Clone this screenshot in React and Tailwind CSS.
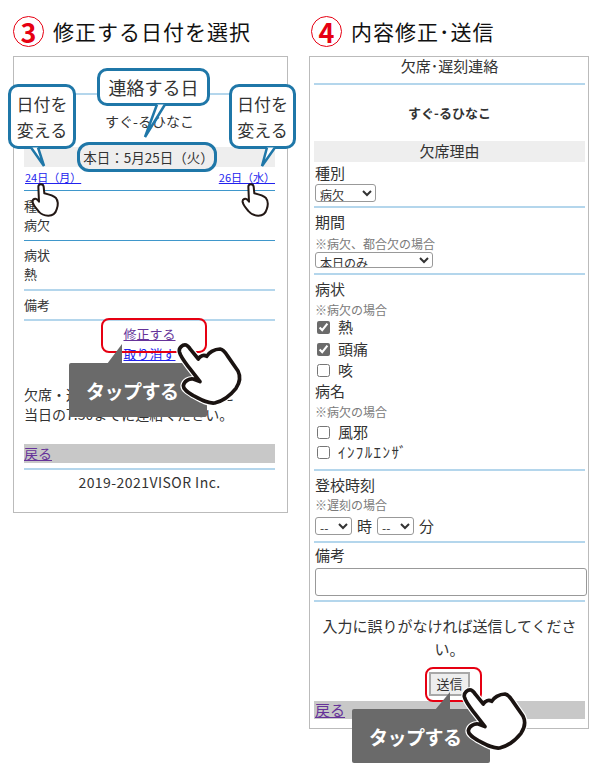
import React from "react";

const Line = ({ light }) => (
  <div className={light ? "h-[2px] shrink-0 bg-[#b4d6ec]" : "h-[1px] shrink-0 bg-[#3f97cb]"} />
);

// Heading with the red circled number
const Heading = ({ num, title, className }) => (
  <div className={`flex h-[56px] items-start pt-[16px] ${className}`}>
    <div className="flex h-[31px] w-[31px] items-center justify-center rounded-full border-[1.500px] border-[#e60012] text-[27px] font-bold leading-none text-[#e60012]">
      {num}
    </div>
    <div className="ml-[9px] h-[31px] text-[21px] leading-[31px] tracking-[1px] text-[#111]">{title}</div>
  </div>
);

const Row = ({ children, className = "" }) => (
  <div className={`flex shrink-0 items-center ${className}`}>{children}</div>
);

const Label = ({ children, className = "h-[28px]" }) => (
  <Row className={`${className} pl-[1px] text-[15px]`}>{children}</Row>
);

const Note = ({ children, className = "h-[15px]" }) => (
  <Row className={`${className} pl-[1px] text-[12px] text-[#7a7a7a]`}>{children}</Row>
);

const Check = ({ label, checked, className = "h-[22px]" }) => (
  <Row className={`${className} pl-[3px] text-[15px]`}>
    <input type="checkbox" defaultChecked={checked} className="m-0 h-[13px] w-[13px] accent-[#6b6b6b]" />
    <span className="ml-[8px]">{label}</span>
  </Row>
);

// Blue speech bubble, tail is drawn in the overlay svg
const Bubble = ({ className, children }) => (
  <div className={`absolute flex items-center justify-center rounded-[10px] border-[3px] border-[#1f77a8] bg-white text-center text-[#333] ${className}`}>
    {children}
  </div>
);

const Tap = ({ className }) => (
  <div className={`absolute flex h-[54px] w-[138px] items-center rounded-[2px] bg-[#6a6a6a] pl-[17px] text-[19px] font-bold leading-none tracking-[-0.500px] text-white ${className}`}>
    タップする
  </div>
);

const bigHand =
  "M28 50C26 38 38 28 48 30C54 32 58 38 62 44L85 72C90 62 102 58 110 64C116 54 132 42 150 42C160 44 166 52 172 62L204 108C212 124 210 142 198 160C182 180 160 198 134 204C112 206 92 194 70 182C54 172 40 164 40 152C42 138 58 130 70 132L90 140L62 104C50 88 32 68 28 50Z";

const BigHand = ({ className }) => (
  <svg viewBox="0 0 255 240" className={`absolute h-[80px] w-[85px] ${className}`}>
    <path d={bigHand} fill="#fff" stroke="#fff" strokeWidth="18" strokeLinejoin="round" />
    <path d={bigHand} fill="#fff" stroke="#1a1311" strokeWidth="11" strokeLinejoin="round" />
  </svg>
);

const SmallHand = ({ className }) => (
  <svg viewBox="0 0 135 135" className={`absolute h-[45px] w-[45px] ${className}`}>
    <path
      d="M40 35C40 25 55 25 56 35L58 55C70 58 85 62 92 68C100 78 100 90 95 103C92 115 85 122 70 122C55 122 48 118 40 108C33 100 26 92 23 82C21 72 32 68 38 75L42 80Z"
      fill="#fff"
      stroke="#231815"
      strokeWidth="6"
      strokeLinejoin="round"
    />
  </svg>
);

const RedBox = ({ className }) => (
  <div className={`absolute rounded-[8px] border-[2px] border-[#e60012] ${className}`} />
);

function PanelLeft() {
  return (
    <div className="flex h-[457px] w-[275px] flex-col border border-[#bbb] pl-[10px] pr-[12px] text-[13px] text-[#333]">
      <div className="h-[36px] shrink-0" />
      <Line light />
      <Row className="h-[52px] justify-center text-[14px]">すぐ-るひなこ</Row>
      {/* date text sits in the callout pill on top of this bar */}
      <div className="h-[20px] shrink-0 bg-[#eee]" />
      <div className="flex h-[23px] shrink-0 items-start justify-between pt-[1px] text-[11px] leading-[18px] text-[#2222ee] underline">
        <span className="pl-[1px]">24日（月）</span>
        <span>26日（水）</span>
      </div>
      <Line />
      <Row className="mt-[5px] h-[19px]">種別</Row>
      <Row className="h-[19px]">病欠</Row>
      <div className="h-[6px] shrink-0" />
      <Line />
      <Row className="mt-[4px] h-[19px]">病状</Row>
      <Row className="h-[19px]">熱</Row>
      <div className="h-[6px] shrink-0" />
      <Line light />
      <Row className="mt-[4px] h-[19px]">備考</Row>
      <div className="h-[5px] shrink-0" />
      <Line light />
      <Row className="mt-[3px] h-[20px] justify-center text-[#663399] underline">修正する</Row>
      <Row className="h-[20px] justify-center text-[#2222ee] underline">取り消す</Row>
      <Row className="mt-[20px] h-[20px] text-[14px]">欠席・遅刻の連絡は担任の先生に</Row>
      <Row className="h-[20px] text-[14px]">当日の7:30までに連絡ください。</Row>
      <Row className="mt-[20px] h-[19px] bg-[#c8c8c8] text-[14px] text-[#663399] underline">戻る</Row>
      <div className="h-[5px] shrink-0" />
      <Line light />
      <Row className="h-[25px] justify-center text-[14px] tracking-[0.450px]">2019-2021VISOR Inc.</Row>
    </div>
  );
}

function PanelRight() {
  return (
    <div className="flex h-[673px] w-[280px] flex-col border border-[#bbb] pl-[4px] pr-[3px] text-[13px] text-[#333]">
      <Row className="h-[18px] justify-center text-[15px]">欠席･遅刻連絡</Row>
      <div className="h-[8px] shrink-0" />
      <Line light />
      <Row className="h-[56px] justify-center text-[13px] font-bold">すぐ-るひなこ</Row>
      <Row className="h-[21px] justify-center bg-[#eee] text-[15px]">欠席理由</Row>
      <Label className="h-[22px]">種別</Label>
      <div className="h-[18px] shrink-0 pl-[1px]">
        <select className="h-[18px] w-[61px] rounded-[3px] border border-[#999] text-[12px] text-[#333]">
          <option>病欠</option>
        </select>
      </div>
      <div className="h-[4px] shrink-0" />
      <Line light />
      <Label>期間</Label>
      <Note className="h-[16px]">※病欠、都合欠の場合</Note>
      <div className="h-[16px] shrink-0 pl-[1px]">
        <select className="h-[16px] w-[118px] rounded-[3px] border border-[#999] text-[12px] leading-none text-[#333]">
          <option>本日のみ</option>
        </select>
      </div>
      <div className="h-[5px] shrink-0" />
      <Line light />
      <Label>病状</Label>
      <Note className="h-[13px]">※病欠の場合</Note>
      <Check label="熱" checked />
      <Check label="頭痛" checked />
      <Check label="咳" className="h-[21px]" />
      <Label className="h-[21px]">病名</Label>
      <Note className="h-[20px]">※病欠の場合</Note>
      <Check label="風邪" className="h-[20px]" />
      <Row className="h-[21px] pl-[3px] text-[15px] tracking-[1.400px]">
        <input type="checkbox" className="m-0 h-[13px] w-[13px] accent-[#6b6b6b]" />
        <span className="ml-[8px]">ｲﾝﾌﾙｴﾝｻﾞ</span>
      </Row>
      <div className="h-[6px] shrink-0" />
      <Line light />
      <Label>登校時刻</Label>
      <Note className="h-[12px]">※遅刻の場合</Note>
      <Row className="mt-[6px] h-[18px] gap-[5px] pl-[1px] text-[15px]">
        <select className="h-[18px] w-[37px] rounded-[3px] border border-[#999] text-[12px] text-[#333]">
          <option>--</option>
        </select>
        <span>時</span>
        <select className="h-[18px] w-[37px] rounded-[3px] border border-[#999] text-[12px] text-[#333]">
          <option>--</option>
        </select>
        <span>分</span>
      </Row>
      <div className="h-[6px] shrink-0" />
      <Line light />
      <Label className="h-[25px]">備考</Label>
      <input type="text" className="ml-[1px] h-[28px] w-[272px] shrink-0 rounded-[3px] border border-[#999]" />
      <div className="h-[4px] shrink-0" />
      <Line light />
      <div className="mt-[12px] shrink-0 px-[4px] text-center text-[15px] leading-[23px]">
        入力に誤りがなければ送信してください。
      </div>
      <div className="mt-[12px] flex shrink-0 justify-center">
        <button className="h-[24px] w-[41px] border-2 border-[#a8a8a8] bg-[#eee] pb-[2px] text-[13px] leading-none text-[#333]">送信</button>
      </div>
      <Row className="mt-[5px] h-[18px] bg-[#c8c8c8] pl-[1px] text-[15px] text-[#663399] underline">戻る</Row>
    </div>
  );
}

export default function App() {
  return (
    <div className="relative h-[777px] w-[600px] overflow-hidden bg-white font-['Noto_Sans_CJK_JP','Liberation_Sans',sans-serif]">
      <div className="flex gap-[21px] pl-[13px]">
        <div className="flex flex-col">
          <Heading num="3" title="修正する日付を選択" />
          <PanelLeft />
        </div>
        <div className="flex flex-col">
          <Heading num="4" title="内容修正･送信" className="pl-[2px]" />
          <PanelRight />
        </div>
      </div>

      {/* callouts over the left panel */}
      <Bubble className="left-[8px] top-[84px] h-[65px] w-[68px] text-[17px] leading-[26px]">日付を<br />変える</Bubble>
      <Bubble className="left-[97px] top-[68px] h-[38px] w-[113px] text-[18px]">連絡する日</Bubble>
      <Bubble className="left-[229px] top-[84px] h-[65px] w-[67px] text-[17px] leading-[26px]">日付を<br />変える</Bubble>
      <div className="absolute left-[77px] top-[142px] flex h-[30px] w-[140px] items-center justify-center rounded-[12px] border-[3px] border-[#1f77a8] bg-[#eee] pl-[3px] text-[13.500px] text-[#333]">
        本日：5月25日（火）
      </div>

      <RedBox className="left-[101px] top-[318px] h-[35px] w-[106px]" />
      <RedBox className="left-[425px] top-[667px] h-[35px] w-[57px]" />

      <Tap className="left-[69px] top-[363px]" />
      <Tap className="left-[352px] top-[709px]" />

      {/* bubble tails and tooltip tails */}
      <svg viewBox="0 0 600 777" className="absolute left-0 top-0 h-[777px] w-[600px]">
        <path d="M31 147.500L44 166L38 147.500" fill="#fff" stroke="#1f77a8" strokeWidth="2.500" />
        <path d="M267 147.500L262 166L275 147.500" fill="#fff" stroke="#1f77a8" strokeWidth="2.500" />
        <path d="M157 104.500L145 137L165 104.500" fill="#fff" stroke="#1f77a8" strokeWidth="2.500" />
        <path d="M107 364L122 344V364Z" fill="#6a6a6a" />
        <path d="M435 710L450 692V710Z" fill="#6a6a6a" />
      </svg>

      <SmallHand className="left-[25px] top-[175px]" />
      <SmallHand className="left-[235px] top-[175px]" />
      <BigHand className="left-[170px] top-[335px]" />
      <BigHand className="left-[455px] top-[680px]" />
    </div>
  );
}
